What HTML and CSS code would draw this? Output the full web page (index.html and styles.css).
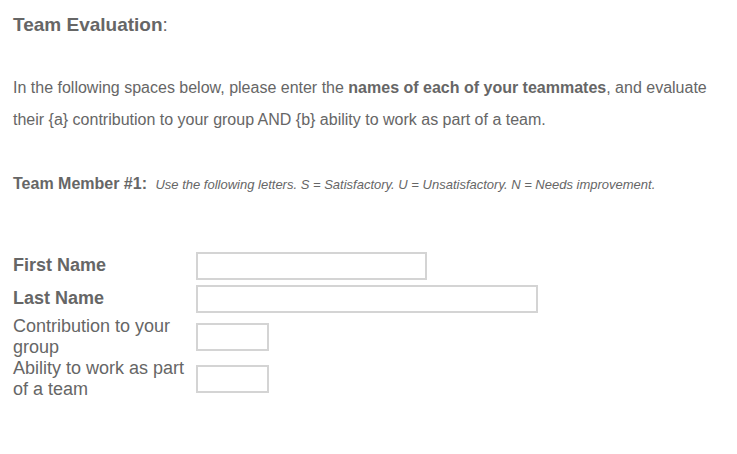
FILE: index.html
```html
<!DOCTYPE html>
<html>
<head>
<meta charset="utf-8">
<link rel="stylesheet" href="styles.css">
</head>
<body>
<div class="page">
  <h1 class="title"><b>Team Evaluation</b>:</h1>
  <p class="intro">In the following spaces below, please enter the <b>names of each of your teammates</b>, and evaluate their {a} contribution to your group AND {b} ability to work as part of a team.</p>
  <div class="member"><b class="member-label">Team Member #1:</b> <i class="note">Use the following letters. S = Satisfactory. U = Unsatisfactory. N = Needs improvement.</i></div>
  <form class="form">
    <label class="label bold" for="fn">First Name</label>
    <input class="field w-first" id="fn" type="text">
    <label class="label bold" for="ln">Last Name</label>
    <input class="field w-last" id="ln" type="text">
    <label class="label" for="c1">Contribution to your group</label>
    <input class="field w-small" id="c1" type="text">
    <label class="label" for="a1">Ability to work as part of a team</label>
    <input class="field w-small" id="a1" type="text">
  </form>
</div>
</body>
</html>
```
FILE: styles.css
```css
html, body {
  margin: 0;
  padding: 0;
  background: #ffffff;
}
.page {
  padding: 13px 13px 0 13px;
  font-family: "Liberation Sans", Arial, sans-serif;
  color: #666666;
}
.title {
  margin: 0;
  font-size: 19px;
  font-weight: normal;
  line-height: 24px;
}
.title b {
  font-weight: bold;
}
.intro {
  margin: 35px 0 0 0;
  font-size: 16px;
  line-height: 32px;
  width: 710px;
}
.member {
  margin-top: 38px;
  line-height: 20px;
}
.member-label {
  font-size: 16px;
}
.note {
  font-size: 13px;
  margin-left: 4px;
}
.form {
  margin-top: 54px;
  display: grid;
  grid-template-columns: 183px auto;
  grid-template-rows: 33px 33px 44px 40px;
  align-items: center;
  justify-items: start;
}
.label {
  font-size: 18px;
  line-height: 21px;
}
.label.bold {
  font-weight: bold;
}
.field {
  box-sizing: border-box;
  height: 28px;
  border: 2px solid #d4d4d4;
  border-radius: 0;
  padding: 0 4px;
  margin: 0;
  background: #fff;
  font: inherit;
}
.w-first { width: 231px; }
.w-last { width: 342px; }
.w-small { width: 73px; }
```
